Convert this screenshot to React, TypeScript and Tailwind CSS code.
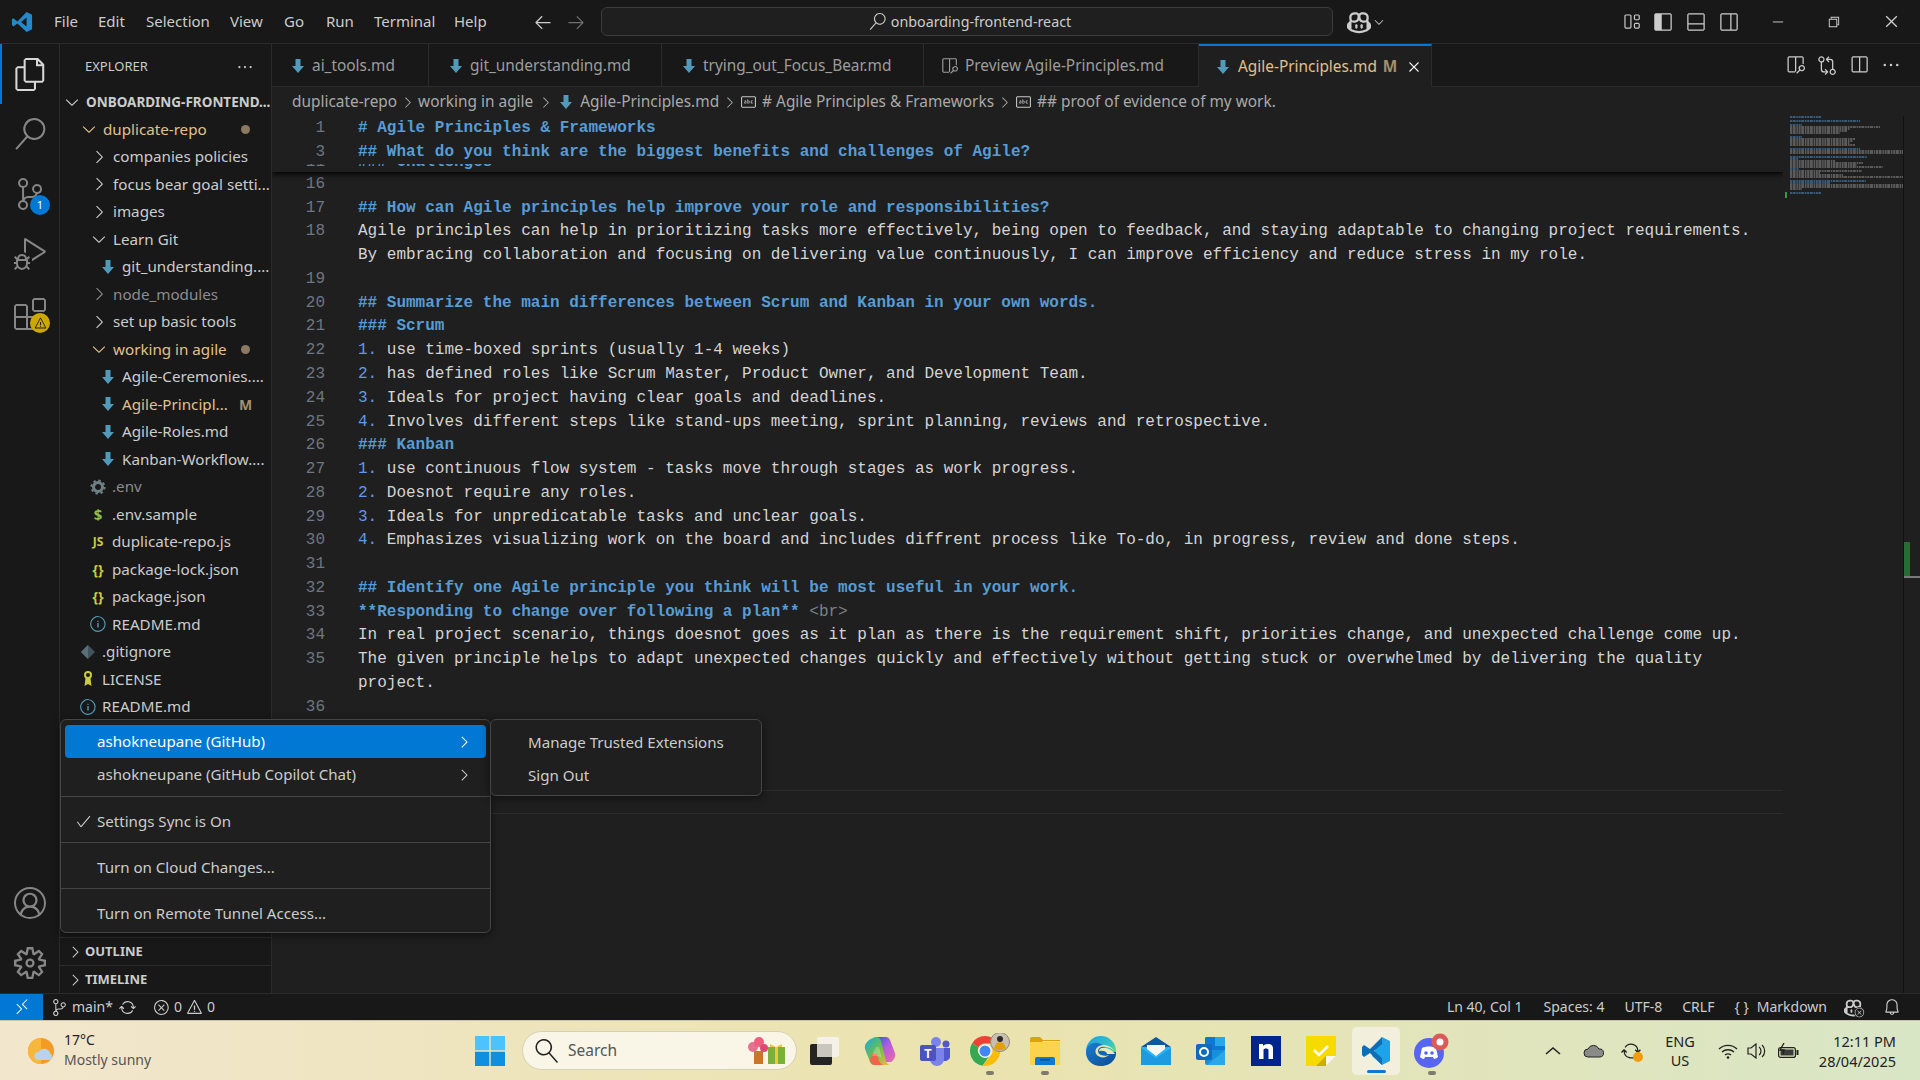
import { ReactNode } from 'react';
import {
  VscAccount, VscArrowLeft, VscArrowRight, VscBell, VscCheck, VscChevronDown, VscChevronRight, VscChromeClose,
  VscChromeMinimize, VscChromeRestore, VscClose, VscCopilot, VscDebugAlt, VscEllipsis, VscError, VscExtensions,
  VscFiles, VscGitCompare, VscInfo, VscLayout, VscLayoutSidebarLeft,
  VscLayoutSidebarRightOff, VscOpenPreview, VscRemote, VscSearch, VscSettingsGear, VscSourceControl,
  VscSplitHorizontal, VscSymbolString, VscSync, VscWarning,
} from 'react-icons/vsc';

const UI = "font-['Noto_Sans',sans-serif]";

function MdIcon({ className = 'mr-[6px]' }: { className?: string }) {
  return (
    <svg width="16" height="16" viewBox="0 0 16 16" className={`shrink-0 ${className}`}>
      <path d="M5.5 1h5v7H14l-6 7-6-7h3.5z" fill="#519aba" />
    </svg>
  );
}

type Row = {
  name: string;
  pad: string;
  kind: 'open' | 'closed' | 'md' | 'gear' | 'dollar' | 'js' | 'json' | 'info' | 'git' | 'key';
  color?: string;
  dot?: boolean;
  m?: boolean;
  bold?: boolean;
};

const rows: Row[] = [
  { name: 'ONBOARDING-FRONTEND...', pad: 'pl-[64px]', kind: 'open', bold: true },
  { name: 'duplicate-repo', pad: 'pl-[81px]', kind: 'open', color: 'text-[#e2c08d]', dot: true },
  { name: 'companies policies', pad: 'pl-[91px]', kind: 'closed' },
  { name: 'focus bear goal setti...', pad: 'pl-[91px]', kind: 'closed' },
  { name: 'images', pad: 'pl-[91px]', kind: 'closed' },
  { name: 'Learn Git', pad: 'pl-[91px]', kind: 'open' },
  { name: 'git_understanding....', pad: 'pl-[100px]', kind: 'md' },
  { name: 'node_modules', pad: 'pl-[91px]', kind: 'closed', color: 'text-[#8c8c8c]' },
  { name: 'set up basic tools', pad: 'pl-[91px]', kind: 'closed' },
  { name: 'working in agile', pad: 'pl-[91px]', kind: 'open', color: 'text-[#e2c08d]', dot: true },
  { name: 'Agile-Ceremonies....', pad: 'pl-[100px]', kind: 'md' },
  { name: 'Agile-Principl...', pad: 'pl-[100px]', kind: 'md', color: 'text-[#e2c08d]', m: true },
  { name: 'Agile-Roles.md', pad: 'pl-[100px]', kind: 'md' },
  { name: 'Kanban-Workflow....', pad: 'pl-[100px]', kind: 'md' },
  { name: '.env', pad: 'pl-[90px]', kind: 'gear', color: 'text-[#8c8c8c]' },
  { name: '.env.sample', pad: 'pl-[90px]', kind: 'dollar' },
  { name: 'duplicate-repo.js', pad: 'pl-[90px]', kind: 'js' },
  { name: 'package-lock.json', pad: 'pl-[90px]', kind: 'json' },
  { name: 'package.json', pad: 'pl-[90px]', kind: 'json' },
  { name: 'README.md', pad: 'pl-[90px]', kind: 'info' },
  { name: '.gitignore', pad: 'pl-[80px]', kind: 'git' },
  { name: 'LICENSE', pad: 'pl-[80px]', kind: 'key' },
  { name: 'README.md', pad: 'pl-[80px]', kind: 'info' },
];

function RowIcon({ kind }: { kind: Row['kind'] }) {
  const box = 'w-[16px] h-[16px] mr-[6px] shrink-0 flex items-center justify-center';
  if (kind === 'open') return <span className={box}><VscChevronDown size={20} className="shrink-0" /></span>;
  if (kind === 'closed') return <span className={box}><VscChevronRight size={20} className="shrink-0" /></span>;
  if (kind === 'md') return <MdIcon />;
  if (kind === 'gear')
    return (
      <svg className={box} viewBox="0 0 16 16">
        <circle cx="8" cy="8" r="4.5" fill="none" stroke="#6d8086" strokeWidth="3" />
        <circle cx="8" cy="8" r="6.6" fill="none" stroke="#6d8086" strokeWidth="2" strokeDasharray="2.5 2.7" />
      </svg>
    );
  if (kind === 'dollar') return <span className={`${box} font-bold text-[15px] text-[#8dc149]`}>$</span>;
  if (kind === 'js') return <span className={`${box} font-bold text-[12px] text-[#cbcb41]`}>JS</span>;
  if (kind === 'json') return <span className={`${box} font-bold text-[14px] text-[#cbcb41]`}>{'{}'}</span>;
  if (kind === 'info') return <span className={`${box} text-[#519aba]`}><VscInfo size={18} className="shrink-0" /></span>;
  if (kind === 'git')
    return (
      <svg className={box} viewBox="0 0 16 16">
        <path d="M8 1l7 7-7 7-7-7z" fill="#41535b" />
        <path d="M8 1l-7 7 7 7z" fill="#5b6f78" />
      </svg>
    );
  return (
    <svg className={box} viewBox="0 0 16 16">
      <circle cx="8" cy="4" r="3" fill="none" stroke="#cbcb41" strokeWidth="2" />
      <path d="M5.5 7h5l1 8-3.5-2-3.5 2z" fill="#cbcb41" />
    </svg>
  );
}

function ActivityItem({ children, active }: { children: ReactNode; active?: boolean }) {
  return (
    <div className={`h-[60px] flex items-center justify-center relative ${active ? 'text-[#d7d7d7] border-l-[2px] border-[#0078d4]' : 'text-[#868686]'}`}>
      {children}
    </div>
  );
}

type Seg = { t: string; c: string; b?: boolean };
type Line = { n?: number; s: Seg[]; current?: boolean; green?: boolean };
const H = 'text-[#569cd6]';
const T = 'text-[#d4d4d4]';
const L = 'text-[#6796e6]';
const h = (n: number, t: string): Line => ({ n, s: [{ t, c: H, b: true }] });
const item = (n: number, num: string, t: string): Line => ({ n, s: [{ t: num, c: L }, { t, c: T }] });
const plain = (n: number | undefined, t: string): Line => ({ n, s: [{ t, c: T }] });

const lines: Line[] = [
  { n: 16, s: [] },
  h(17, '## How can Agile principles help improve your role and responsibilities?'),
  plain(18, 'Agile principles can help in prioritizing tasks more effectively, being open to feedback, and staying adaptable to changing project requirements.'),
  plain(undefined, 'By embracing collaboration and focusing on delivering value continuously, I can improve efficiency and reduce stress in my role.'),
  { n: 19, s: [] },
  h(20, '## Summarize the main differences between Scrum and Kanban in your own words.'),
  h(21, '### Scrum'),
  item(22, '1.', ' use time-boxed sprints (usually 1-4 weeks)'),
  item(23, '2.', ' has defined roles like Scrum Master, Product Owner, and Development Team.'),
  item(24, '3.', ' Ideals for project having clear goals and deadlines.'),
  item(25, '4.', ' Involves different steps like stand-ups meeting, sprint planning, reviews and retrospective.'),
  h(26, '### Kanban'),
  item(27, '1.', ' use continuous flow system - tasks move through stages as work progress.'),
  item(28, '2.', ' Doesnot require any roles.'),
  item(29, '3.', ' Ideals for unpredicatable tasks and unclear goals.'),
  item(30, '4.', ' Emphasizes visualizing work on the board and includes diffrent process like To-do, in progress, review and done steps.'),
  { n: 31, s: [] },
  h(32, '## Identify one Agile principle you think will be most useful in your work.'),
  { n: 33, s: [{ t: '**Responding to change over following a plan**', c: H, b: true }, { t: ' <br>', c: 'text-[#808080]' }] },
  plain(34, 'In real project scenario, things doesnot goes as it plan as there is the requirement shift, priorities change, and unexpected challenge come up.'),
  plain(35, 'The given principle helps to adapt unexpected changes quickly and effectively without getting stuck or overwhelmed by delivering the quality'),
  plain(undefined, 'project.'),
  { n: 36, s: [] },
  { n: 37, s: [], green: true },
  h(38, '## proof of evidence of my work.'),
  { n: 39, s: [] },
  { n: 40, s: [], current: true },
];

function CodeRow({ line }: { line: Line }) {
  return (
    <div className={`flex h-[23.77px] items-center whitespace-pre relative ${line.current ? 'border-y border-[#2c2c2c]' : ''}`}>
      <span className="w-[53px] text-right text-[#6e7681] shrink-0">{line.n ?? ''}</span>
      <span className="w-[8px] shrink-0" />
      {line.green ? <span className="w-[3px] h-full bg-[#2ea043] shrink-0 -mr-[3px]" /> : null}
      <span className="w-[25px] shrink-0" />
      {line.s.map((seg, i) => (
        <span key={i} className={`${seg.c} ${seg.b ? 'font-bold' : ''}`}>{seg.t}</span>
      ))}
    </div>
  );
}

const tabs = [
  { name: 'ai_tools.md', w: 'w-[157px]', pl: 'pl-[18px]' },
  { name: 'git_understanding.md', w: 'w-[233px]', pl: 'pl-[19px]' },
  { name: 'trying_out_Focus_Bear.md', w: 'w-[262px]', pl: 'pl-[19px]' },
];

const menus = [
  { t: 'File', w: 'w-[44px]' },
  { t: 'Edit', w: 'w-[48px]' },
  { t: 'Selection', w: 'w-[84px]' },
  { t: 'View', w: 'w-[54px]' },
  { t: 'Go', w: 'w-[42px]' },
  { t: 'Run', w: 'w-[48px]' },
  { t: 'Terminal', w: 'w-[80px]' },
  { t: 'Help', w: 'w-[50px]' },
];

// [y, width, blue?]
const mini: [number, number, number][] = [
  [0.7, 31, 1], [4.7, 70, 1], [8.7, 12, 1], [10.7, 90, 0], [12.7, 60, 0], [14.7, 57, 0], [16.7, 50, 0],
  [20.7, 12, 1], [22.7, 65, 0], [24.7, 63, 0], [26.7, 60, 0], [28.7, 65, 0], [32.7, 70, 1], [34.7, 113, 0],
  [36.7, 113, 0], [40.7, 77, 1], [42.7, 8, 1], [44.7, 45, 0], [46.7, 73, 0], [48.7, 67, 0], [50.7, 93, 0],
  [52.7, 9, 1], [54.7, 72, 0], [56.7, 30, 0], [58.7, 53, 0], [60.7, 113, 0], [64.7, 76, 1], [66.7, 40, 1],
  [68.7, 113, 0], [70.7, 113, 0], [72.7, 12, 0], [76.7, 31, 1],
];

function Minimap() {
  return (
    <svg width="120" height="90" className="block">
      {mini.map(([y, w, blue], i) => (
        <line key={i} x1="7" x2={7 + w} y1={y + 0.3} y2={y + 0.3} strokeWidth="1.6" strokeDasharray="2 0.6 3 0.8 1.500 0.7" stroke={blue ? '#4a7fae' : '#7e7e7e'} opacity="0.85" />
      ))}
      <rect x="2" y="76" width="2" height="6" fill="#2ea043" />
    </svg>
  );
}

function Chrome() {
  return (
    <svg width="44" height="36" viewBox="0 0 44 36">
      <path d="M4.000 10.500A15 15 0 0 1 30 10.500H17a7.500 7.500 0 0 0-6.500 3.750z" fill="#ea4335" />
      <path d="M4 10.500A15 15 0 0 0 14.500 32.800L20.700 24A7.500 7.500 0 0 1 10.500 14.250z" fill="#34a853" />
      <path d="M30 10.500A15 15 0 0 1 14.500 32.800L23.500 21.800A7.500 7.500 0 0 0 23.500 14z" fill="#fbbc04" />
      <circle cx="17" cy="18" r="6.500" fill="#fff" />
      <circle cx="17" cy="18" r="5.500" fill="#4285f4" />
      <circle cx="32" cy="9" r="9.500" fill="#c7c0b0" stroke="#8e8a7e" />
      <path d="M26 15c1-4 3-6 6-6s5 2 6 6a9 9 0 0 1-12 0z" fill="#e0a10e" />
      <circle cx="32" cy="6" r="3" fill="#2f2a26" />
    </svg>
  );
}

const taskIcons: ReactNode[] = [
  <svg key="tv" width="32" height="30" viewBox="0 0 32 30">
    <rect x="1" y="8" width="22" height="21" rx="2" fill="#242424" />
    <rect x="8" y="1" width="22" height="20" rx="2" fill="#f4f1e8" />
    <rect x="8" y="8" width="15" height="13" fill="#c8c6bd" />
  </svg>,
  <svg key="cp" width="32" height="30" viewBox="0 0 32 30">
    <defs>
      <linearGradient id="cpa" x1="0" y1="0" x2="1" y2="1"><stop offset="0" stopColor="#19a7e0" /><stop offset="0.5" stopColor="#6bc04b" /><stop offset="1" stopColor="#f6b93b" /></linearGradient>
      <linearGradient id="cpb" x1="0" y1="0" x2="1" y2="1"><stop offset="0" stopColor="#1b5fd9" /><stop offset="0.5" stopColor="#b55ce0" /><stop offset="1" stopColor="#ee6ca0" /></linearGradient>
    </defs>
    <path d="M10 1h12c2 0 3 1 4 3l5 13c1 4-1 7-4 9h-6l-5-20c-1-3-3-5-6-5z" fill="url(#cpb)" />
    <path d="M9 2c3-2 7-1 8 3l5 20c1 2 2 4 4 4H10c-2 0-3-1-4-3L1 13C0 8 4 4 9 2z" fill="url(#cpa)" />
    <path d="M11 29h9c-2 0-4-2-5-4l-2-7h-5l-2 5c0 3 2 6 5 6z" fill="#f0654a" />
    <path d="M12 11h3l3 12c-1-2-3-3-6-3H8z" fill="#ffffff" opacity="0.25" />
  </svg>,
  <svg key="tm" width="32" height="30" viewBox="0 0 32 30">
    <circle cx="17" cy="6" r="5" fill="#7b83eb" />
    <circle cx="27" cy="8" r="3.500" fill="#5059c9" />
    <path d="M22 12h9v9a5 5 0 0 1-8 3z" fill="#5059c9" />
    <path d="M9 12h16v11a7 7 0 0 1-14 0z" fill="#7b83eb" />
    <rect x="1" y="9" width="16" height="16" rx="2" fill="#4b53bc" />
    <text x="9" y="21.500" textAnchor="middle" fontSize="12" fontWeight="700" fill="#fff" fontFamily="Liberation Sans">T</text>
  </svg>,
  <Chrome key="ch" />,
  <svg key="fl" width="32" height="30" viewBox="0 0 32 30">
    <path d="M1 3a2 2 0 0 1 2-2h8l4 4h-14z" fill="#dba10e" />
    <path d="M1 5h30v-1H15l-3 3H1z" fill="#dba10e" />
    <rect x="1" y="6" width="30" height="23" rx="1" fill="#fcd34d" />
    <path d="M6 29v-6a2 2 0 0 1 2-2h16a2 2 0 0 1 2 2v6z" fill="#0f78d4" />
    <rect x="11" y="23" width="10" height="1.500" fill="#0a4d8c" />
  </svg>,
  <svg key="ed" width="32" height="30" viewBox="0 0 32 30">
    <defs>
      <linearGradient id="edg" x1="0" y1="0" x2="1" y2="0.800"><stop offset="0" stopColor="#1b9de2" /><stop offset="0.6" stopColor="#35c1c8" /><stop offset="1" stopColor="#6fe25f" /></linearGradient>
      <linearGradient id="edb" x1="0" y1="0" x2="1" y2="1"><stop offset="0" stopColor="#1b7fd0" /><stop offset="1" stopColor="#0b4a92" /></linearGradient>
    </defs>
    <circle cx="16" cy="15" r="15" fill="url(#edg)" />
    <path d="M1 16c0-7 7-10 12-9 5 1 8 4 8 9h10C31 18 31 20 30 22c-3 6-9 8-14 8C7 30 1 24 1 16z" fill="url(#edb)" />
    <path d="M31 17c-1-2-4-5-10-6-5-1-8 1-8 4 0 2 1 3 3 4 3 1 6 1 8 0-3 3-8 3-11 1-4-3-3-8 1-10 5-2 12-1 17 7z" fill="#eee7b6" opacity="0.950" />
    <path d="M14 15c0-3 4-4 7-3 4 1 7 3 9 6h-8c0-2-3-4-8-3z" fill="#eee7b6" />
  </svg>,
  <svg key="ml" width="32" height="30" viewBox="0 0 32 30">
    <path d="M1 11L16 1l15 10v3H1z" fill="#0b5a9e" />
    <rect x="1" y="11" width="30" height="18" fill="#29b6f6" />
    <path d="M1 29V12l15 10 15-10v17z" fill="#1e9be0" />
    <path d="M7 9h18v4l-9 7-9-7z" fill="#f8f6ef" />
  </svg>,
  <svg key="ol" width="32" height="30" viewBox="0 0 32 30">
    <rect x="10" y="1" width="20" height="18" rx="1" fill="#0f78d4" />
    <rect x="20" y="1" width="10" height="9" fill="#28a8ea" />
    <path d="M10 14l20 0v15H12a2 2 0 0 1-2-2z" fill="#1490df" />
    <path d="M30 14v15H12z" fill="#2aa7e8" />
    <rect x="1" y="8" width="16" height="16" rx="2" fill="#0f6cbd" />
    <circle cx="9" cy="16" r="4" fill="none" stroke="#fff" strokeWidth="2" />
  </svg>,
  <svg key="n" width="30" height="30" viewBox="0 0 30 30">
    <rect width="30" height="30" fill="#00258c" />
    <path d="M8 8v15h4.500V14c0-2 5-2 5 0v9H22V12c0-5-8-5-10-2V8z" fill="#fff" />
  </svg>,
  <svg key="st" width="30" height="30" viewBox="0 0 30 30">
    <path d="M0 0h30v20L20 30H0z" fill="#f6da00" />
    <path d="M20 30V21a1 1 0 0 1 1-1h9z" fill="#f8f6ef" />
    <path d="M20 20l-10 10h10z" fill="#c7b000" />
    <path d="M8 14l5 5 9-9" fill="none" stroke="#fff" strokeWidth="2.500" />
  </svg>,
  <div key="vs" className="w-[48px] h-[48px] rounded-[5px] bg-[#f2efdc] flex flex-col items-center justify-center relative">
    <svg width="30" height="30" viewBox="0 0 30 30">
      <path d="M21 1l8 4v20l-8 4-10-9z" fill="#1fa3e8" />
      <path d="M21 1L9 13l-6-4-2 2v8l2 2 6-4 12 12v-7l-8-7 8-7z" fill="#0c6fb5" />
    </svg>
    <span className="absolute bottom-[2px] w-[19px] h-[3px] rounded-full bg-[#0f78d4]" />
  </div>,
  <svg key="dc" width="36" height="36" viewBox="0 0 36 36">
    <circle cx="15" cy="20" r="15" fill="#5865f2" />
    <path d="M8 15c4-2 10-2 14 0l2 9c-1 1-3 2-4 2l-1-2h-8l-1 2c-1 0-3-1-4-2z" fill="#fff" />
    <circle cx="12" cy="20" r="1.800" fill="#5865f2" />
    <circle cx="18" cy="20" r="1.800" fill="#5865f2" />
    <circle cx="26" cy="9" r="8.500" fill="#dc5a5a" />
    <circle cx="26" cy="9" r="3.500" fill="#fff" />
  </svg>,
];

const running = [false, false, false, true, true, false, false, false, false, false, false, true];

export default function App() {
  return (
    <div className={`w-[1920px] h-[1080px] flex flex-col overflow-hidden bg-[#1f1f1f] text-[#cccccc] relative ${UI}`}>
      {/* title bar */}
      <div className="h-[44px] shrink-0 bg-[#181818] border-b border-[#2b2b2b] flex items-center text-[15px]">
        <div className="w-[54px] flex justify-center pr-[10px]">
          <svg width="22" height="22" viewBox="0 0 24 24">
            <path d="M17 1l6 3v16l-6 3-10-9.500-4.500 3.500L1 15V9l1.500-1L7 11.500z" fill="#2489ca" />
            <path d="M17 7l-6 5 6 5z" fill="#181818" />
          </svg>
        </div>
        {menus.map((m) => (
          <span key={m.t} className={m.w}>{m.t}</span>
        ))}
        <div className="w-[34px] ml-[21px] pl-[2px] flex justify-center"><VscArrowLeft size={20} /></div>
        <div className="w-[34px] flex justify-center text-[#6e6e6e]"><VscArrowRight size={20} /></div>
        <div className="ml-[8px] w-[732px] h-[29px] rounded-[6px] border border-[#3c3c3c] bg-[#1f1f1f] flex items-center justify-center gap-[5px] pl-[6px] text-[14.3px]">
          <VscSearch size={17} />
          <span>onboarding-frontend-react</span>
        </div>
        <VscCopilot size={24} className="ml-[14px]" />
        <VscChevronDown size={14} className="ml-[1px]" />
        <VscLayout size={19} className="ml-[236px]" />
        <VscLayoutSidebarLeft size={20} className="ml-[12px]" />
        <VscLayoutSidebarRightOff size={20} className="ml-[13px] rotate-90" />
        <VscLayoutSidebarRightOff size={20} className="ml-[13px]" />
        <VscChromeMinimize size={15} className="ml-[31px]" />
        <VscChromeRestore size={15} className="ml-[41px]" />
        <VscChromeClose size={17} className="ml-[42px]" />
      </div>

      {/* workbench */}
      <div className="flex-1 min-h-0 flex">
        <div className="w-[60px] shrink-0 bg-[#181818] border-r border-[#2b2b2b] flex flex-col">
          <ActivityItem active><VscFiles size={33} /></ActivityItem>
          <ActivityItem><VscSearch size={32} /></ActivityItem>
          <ActivityItem>
            <VscSourceControl size={32} />
            <span className="absolute left-[30px] top-[31px] w-[20px] h-[20px] rounded-full bg-[#0078d4] text-white text-[11px] flex items-center justify-center">1</span>
          </ActivityItem>
          <ActivityItem><VscDebugAlt size={32} /></ActivityItem>
          <ActivityItem>
            <VscExtensions size={32} />
            <span className="absolute left-[30px] top-[29px] w-[20px] h-[20px] rounded-full bg-[#cca700] text-[#222] flex items-center justify-center"><VscWarning size={13} /></span>
          </ActivityItem>
          <div className="mt-auto" />
          <ActivityItem><VscAccount size={32} /></ActivityItem>
          <ActivityItem><VscSettingsGear size={32} /></ActivityItem>
        </div>

        {/* side bar */}
        <div className="w-[212px] shrink-0 bg-[#181818] border-r border-[#2b2b2b] flex flex-col text-[15.2px]">
          <div className="h-[44px] shrink-0 flex items-center justify-between pl-[25px] pr-[17px] pt-[2px] text-[13px]">
            <span>EXPLORER</span>
            <VscEllipsis size={18} />
          </div>
          <div className="flex-1 min-h-0 overflow-hidden">
            {rows.map((r, i) => (
              <div key={i} className={`h-[27.5px] -ml-[60px] flex items-center whitespace-nowrap ${r.pad} ${r.color ?? ''} ${r.bold ? 'font-bold text-[13.5px]' : ''}`}>
                <RowIcon kind={r.kind} />
                <span>{r.name}</span>
                {r.dot ? <span className="absolute left-[241px] w-[9px] h-[9px] rounded-full bg-[#8b7a60]" /> : null}
                {r.m ? <span className="absolute left-[239px] font-bold text-[#a3906e] text-[14px]">M</span> : null}
              </div>
            ))}
          </div>
          <div className="h-[28px] shrink-0 border-t border-[#2b2b2b] flex items-center pl-[6px] font-bold text-[13px]">
            <VscChevronRight size={18} className="mr-[1px]" />OUTLINE
          </div>
          <div className="h-[28px] shrink-0 border-t border-[#2b2b2b] flex items-center pl-[6px] font-bold text-[13px]">
            <VscChevronRight size={18} className="mr-[1px]" />TIMELINE
          </div>
        </div>

        {/* editor */}
        <div className="flex-1 min-w-0 flex flex-col">
          <div className="h-[43px] shrink-0 bg-[#181818] border-b border-[#2b2b2b] flex items-stretch text-[15.4px] whitespace-nowrap">
            {tabs.map((t) => (
              <div key={t.name} className={`${t.w} ${t.pl} pt-[2px] border-r border-[#2b2b2b] flex items-center text-[#9d9d9d] shrink-0`}>
                <MdIcon className="mr-[6px]" />{t.name}
              </div>
            ))}
            <div className="w-[275px] pl-[16px] pt-[2px] border-r border-[#2b2b2b] flex items-center text-[#9d9d9d] shrink-0">
              <VscOpenPreview size={18} className="mr-[7px]" />Preview Agile-Principles.md
            </div>
            <div className="w-[233px] h-[43px] pl-[16px] bg-[#1f1f1f] border-t-2 border-r border-t-[#0078d4] border-r-[#2b2b2b] flex items-center text-[#e2c08d] shrink-0">
              <MdIcon className="mr-[7px]" />Agile-Principles.md
              <span className="ml-[6px] font-bold text-[#a3906e]">M</span>
              <VscClose size={18} className="ml-[8px] text-white" />
            </div>
            <div className="ml-auto flex items-center pr-[19px] gap-[12px]">
              <VscOpenPreview size={20} />
              <VscGitCompare size={20} />
              <VscSplitHorizontal size={20} />
              <VscEllipsis size={20} />
            </div>
          </div>

          <div className="h-[29px] shrink-0 flex items-center pl-[20px] pt-[1px] text-[15.4px] text-[#a9a9a9] whitespace-nowrap">
            duplicate-repo
            <VscChevronRight size={17} className="mx-[2px]" />
            working in agile
            <VscChevronRight size={17} className="mx-[4px]" />
            <MdIcon className="mr-[6px]" />
            Agile-Principles.md
            <VscChevronRight size={17} className="mx-[2px]" />
            <VscSymbolString size={17} className="mr-[5px] text-[#c8c8c8]" />
            # Agile Principles &amp; Frameworks
            <VscChevronRight size={17} className="mx-[2px]" />
            <VscSymbolString size={17} className="mr-[5px] text-[#c8c8c8]" />
            ## proof of evidence of my work.
          </div>

          <div className="flex-1 min-h-0 flex">
            <div className="flex-1 min-w-0 flex flex-col overflow-hidden font-['Liberation_Mono',monospace] text-[16px]">
              <div className="h-[56px] shrink-0 relative z-10 bg-[#1f1f1f] shadow-[0_2px_5px_#000000]">
                <CodeRow line={h(1, '# Agile Principles & Frameworks')} />
                <CodeRow line={h(3, '## What do you think are the biggest benefits and challenges of Agile?')} />
                <div className="h-[8px] overflow-hidden">
                  <div className="-mt-[13px]">
                    <CodeRow line={h(11, '### Challenges')} />
                  </div>
                </div>
              </div>
              {lines.map((l, i) => (
                <CodeRow key={i} line={l} />
              ))}
            </div>
            <div className="w-[120px] shrink-0">
              <Minimap />
            </div>
            <div className="w-[17px] shrink-0 border-l border-[#111111] relative">
              <span className="absolute left-0 top-[426px] w-[6px] h-[34px] bg-[#2a6b35]" />
              <span className="absolute left-0 top-[460px] w-full h-[2px] bg-[#7a7a7a]" />
            </div>
          </div>
        </div>
      </div>

      {/* status bar */}
      <div className="h-[27px] shrink-0 bg-[#181818] border-t border-[#2b2b2b] flex items-center text-[14px] text-[#cccccc]">
        <div className="w-[43px] h-full bg-[#0078d4] flex items-center justify-center text-white"><VscRemote size={18} /></div>
        <VscSourceControl size={17} className="ml-[8px]" />
        <span className="ml-[4px] pb-[2px]">main*</span>
        <VscSync size={17} className="ml-[6px]" />
        <VscError size={17} className="ml-[17px]" />
        <span className="ml-[4px] pb-[2px]">0</span>
        <VscWarning size={17} className="ml-[4px]" />
        <span className="ml-[4px] pb-[2px]">0</span>
        <div className="ml-auto flex items-center pr-[19px]">
          <span className="pb-[2px]">Ln 40, Col 1</span>
          <span className="ml-[21px] pb-[2px]">Spaces: 4</span>
          <span className="ml-[20px] pb-[2px]">UTF-8</span>
          <span className="ml-[20px] pb-[2px]">CRLF</span>
          <span className="ml-[20px] pb-[2px]">{'{ }'}</span>
          <span className="ml-[8px] pb-[2px]">Markdown</span>
          <span className="ml-[17px] relative">
            <VscCopilot size={19} />
            <VscError size={11} className="absolute -right-[2px] -bottom-[1px] bg-[#181818] rounded-full" />
          </span>
          <VscBell size={18} className="ml-[20px]" />
        </div>
      </div>

      {/* taskbar */}
      <div className="h-[60px] shrink-0 flex items-center bg-gradient-to-r from-[#f2e6cd] via-[#ebe3ae] to-[#d9e6c6] border-t border-[#c9c5a5] text-[#222]">
        <div className="w-[475px] shrink-0 flex items-center pl-[27px]">
          <svg width="28" height="28" viewBox="0 0 28 28">
            <circle cx="14" cy="14" r="13" fill="#f59a23" />
            <path d="M14 1a13 13 0 0 0 0 26z" fill="#f6b73c" />
            <path d="M11 23a4 4 0 0 1 1-8 6 6 0 0 1 11 1 4 4 0 0 1 0 7z" fill="#b9d3ee" />
          </svg>
          <div className="ml-[9px] leading-[20px] text-[14px] -mt-[2px]">
            <div>17°C</div>
            <div className="text-[#555]">Mostly sunny</div>
          </div>
        </div>
        <svg width="30" height="30" viewBox="0 0 30 30" className="shrink-0">
          <path d="M0 0h14.300v14.300H0zM15.700 0H30v14.300H15.700z" fill="#4cc2ff" />
          <path d="M0 15.700h14.300V30H0zM15.700 15.700H30V30H15.700z" fill="#0f8fe0" />
        </svg>
        <div className="ml-[17px] w-[275px] h-[39px] shrink-0 rounded-full bg-[#f9f5e7] border border-[#d6d0b4] flex items-center pl-[12px] text-[#555] text-[15.5px]">
          <VscSearch size={24} className="-scale-x-100 text-[#222]" />
          <span className="ml-[9px]">Search</span>
          <svg width="44" height="28" viewBox="0 0 44 28" className="ml-auto mr-[8px]">
            <rect x="10" y="14" width="9" height="13" fill="#c9752c" />
            <circle cx="9" cy="10" r="5" fill="#e76f8f" />
            <circle cx="15" cy="5" r="5" fill="#ef5d7f" />
            <circle cx="20" cy="11" r="4" fill="#d94b73" />
            <rect x="24" y="10" width="17" height="17" fill="#79b13c" />
            <rect x="31" y="10" width="3" height="17" fill="#f2c53a" />
            <path d="M26 7l6 3 6-3v3H26z" fill="#f2c53a" />
          </svg>
        </div>
        <div className="flex shrink-0 items-center">
          {taskIcons.map((icon, i) => (
            <div key={i} className="w-[55.2px] h-[60px] flex items-center justify-center relative">
              {icon}
              {running[i] ? <span className="absolute bottom-[6px] w-[8px] h-[4px] rounded-full bg-[#7d7b6b]" /> : null}
            </div>
          ))}
        </div>
        <div className="ml-auto flex items-center pr-[24px] text-[14.5px] text-[#222]">
          <svg width="16" height="10" viewBox="0 0 16 10"><path d="M1 8l7-6 7 6" fill="none" stroke="#222" strokeWidth="1.600" /></svg>
          <svg width="22" height="14" viewBox="0 0 22 14" className="ml-[22px]">
            <path d="M5 13a4 4 0 0 1 0-8 6 6 0 0 1 11 0 4 4 0 0 1 1 8z" fill="#8a8a88" stroke="#222" strokeWidth="1" />
          </svg>
          <span className="ml-[16px] relative w-[20px] h-[20px] flex items-center justify-center">
            <VscSync size={20} />
            <span className="absolute right-[-2px] bottom-[-1px] w-[10px] h-[10px] rounded-full bg-[#f59a0a]" />
          </span>
          <div className="ml-[15px] w-[48px] text-center leading-[19px]">
            <div>ENG</div>
            <div>US</div>
          </div>
          <svg width="20" height="16" viewBox="0 0 20 16" className="ml-[14px]">
            <path d="M1 6a13 13 0 0 1 18 0M4 9a9 9 0 0 1 12 0M7 12a5 5 0 0 1 6 0" fill="none" stroke="#222" strokeWidth="1.400" />
            <circle cx="10" cy="14.500" r="1.300" fill="#222" />
          </svg>
          <svg width="20" height="16" viewBox="0 0 20 16" className="ml-[9px]">
            <path d="M1 5h3l5-4v14l-5-4H1zM12 4a5 5 0 0 1 0 8M15 2a8 8 0 0 1 0 12" fill="none" stroke="#222" strokeWidth="1.200" />
          </svg>
          <svg width="22" height="16" viewBox="0 0 22 16" className="ml-[10px]">
            <rect x="1.600" y="4.600" width="16.800" height="9.800" rx="2" fill="none" stroke="#222" strokeWidth="1.200" />
            <rect x="3.500" y="6.500" width="13" height="6" fill="#3a3a3a" />
            <rect x="19.500" y="7" width="2" height="5" fill="#222" />
            <path d="M7 0L3 7h4l-1 4" fill="none" stroke="#222" strokeWidth="1.300" />
          </svg>
          <div className="ml-[10px] text-right leading-[20px] w-[87px]">
            <div>12:11 PM</div>
            <div>28/04/2025</div>
          </div>
        </div>
      </div>

      {/* account menu */}
      <div className="absolute left-[60px] top-[719px] w-[431px] h-[214px] rounded-[6px] bg-[#1f1f1f] border border-[#454545] shadow-[0_2px_8px_#00000080] text-[15.1px] px-[4px] pt-[5px] z-20">
        <div className="h-[33px] rounded-[4px] bg-[#0078d4] text-white flex items-center pl-[32px] pr-[13px] justify-between">
          ashokneupane (GitHub)<VscChevronRight size={18} />
        </div>
        <div className="h-[33px] flex items-center pl-[32px] pr-[13px] justify-between">
          ashokneupane (GitHub Copilot Chat)<VscChevronRight size={18} />
        </div>
        <div className="h-px bg-[#454545] -mx-[4px] mt-[5px] mb-[8px]" />
        <div className="h-[33px] flex items-center pl-[10px]">
          <VscCheck size={17} className="mr-[5px]" />Settings Sync is On
        </div>
        <div className="h-px bg-[#454545] -mx-[4px] mt-[4px] mb-[8px]" />
        <div className="h-[33px] flex items-center pl-[32px]">Turn on Cloud Changes...</div>
        <div className="h-px bg-[#454545] -mx-[4px] mt-[4px] mb-[8px]" />
        <div className="h-[33px] flex items-center pl-[32px]">Turn on Remote Tunnel Access...</div>
      </div>
      <div className="absolute left-[490px] top-[719px] w-[272px] h-[77px] rounded-[6px] bg-[#1f1f1f] border border-[#454545] shadow-[0_2px_8px_#00000080] text-[15.1px] pl-[37px] pt-[6px] z-20">
        <div className="h-[33px] flex items-center">Manage Trusted Extensions</div>
        <div className="h-[33px] flex items-center">Sign Out</div>
      </div>
    </div>
  );
}
